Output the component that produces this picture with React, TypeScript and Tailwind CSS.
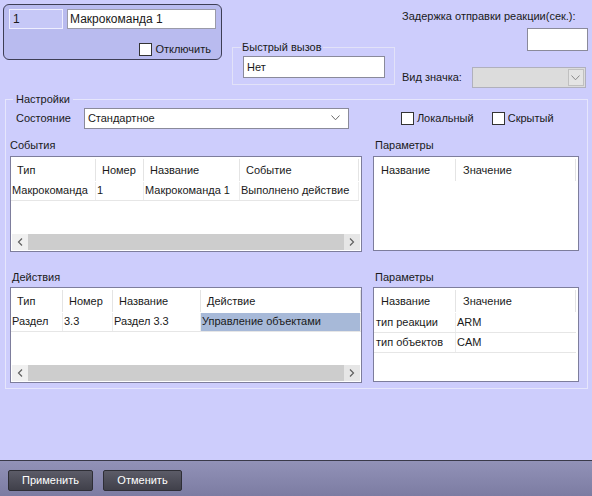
import React from 'react';

const Chevron = ({ color = '#6b6b6b' }: { color?: string }) => (
  <svg width="9" height="6" viewBox="0 0 9 6" fill="none">
    <path d="M0.5 0.5 L4.5 4.8 L8.5 0.5" stroke={color} strokeWidth="1" />
  </svg>
);

const Check = ({ label }: { label: string }) => (
  <label className="flex items-center gap-[3px]">
    <span className="w-[13px] h-[13px] bg-white border border-[#333]" />
    <span>{label}</span>
  </label>
);

const ScrollBar = () => (
  <div className="mt-auto flex h-[16px] mx-[1px] mb-[1px]">
    <div className="w-[16px] flex items-center justify-center bg-[#f0f0f0]">
      <svg width="6" height="8" viewBox="0 0 6 8" fill="none"><path d="M5 0.5 L1.5 4 L5 7.5" stroke="#606060" strokeWidth="1.2" /></svg>
    </div>
    <div className="flex-1 bg-[#cdcdcd]" />
    <div className="w-[16px] flex items-center justify-center bg-[#e6e6e6]">
      <svg width="6" height="8" viewBox="0 0 6 8" fill="none"><path d="M1 0.5 L4.5 4 L1 7.5" stroke="#606060" strokeWidth="1.2" /></svg>
    </div>
  </div>
);

type Col = { title: string; w: number };

function Table({ cols, rows, selected }: { cols: Col[]; rows: string[][]; selected?: [number, number] }) {
  return (
    <div className="w-[352px] h-[96px] bg-white border border-[#7d7d9c] flex flex-col">
      <div className="flex h-[25px] items-center pt-[2px]">
        {cols.map((c, i) => (
          <div key={i} className="h-[22px] flex items-center pl-[6px] border-r border-[#e4e4e4]" style={{ width: c.w }}>
            {c.title}
          </div>
        ))}
      </div>
      {rows.map((r, ri) => (
        <div key={ri} className="flex h-[19px] items-center border-b border-[#e6e6e6]" style={{ width: cols.reduce((a, c) => a + c.w, 0) }}>
          {r.map((cell, ci) => (
            <div
              key={ci}
              className={`h-full flex items-center pl-[1px] border-r border-[#ececec] whitespace-nowrap ${selected && selected[0] === ri && selected[1] === ci ? 'bg-[#a7b9d8]' : ''}`}
              style={{ width: cols[ci].w }}
            >
              {cell}
            </div>
          ))}
        </div>
      ))}
      <ScrollBar />
    </div>
  );
}

function Params({ rows }: { rows: string[][] }) {
  return (
    <div className="w-[206px] h-[95px] bg-white border border-[#7d7d9c]">
      <div className="flex h-[25px] items-center pt-[2px]">
        <div className="w-[82px] h-[22px] flex items-center pl-[7px] border-r border-[#e4e4e4]">Название</div>
        <div className="w-[120px] h-[22px] flex items-center pl-[7px] border-r border-[#e4e4e4]">Значение</div>
      </div>
      {rows.map((r, i) => (
        <div key={i} className="flex h-[20px] w-[202px] border-b border-[#e6e6e6]">
          <div className="w-[82px] flex items-center pl-[2px] border-r border-[#ececec]">{r[0]}</div>
          <div className="flex-1 flex items-center pl-[1px]">{r[1]}</div>
        </div>
      ))}
    </div>
  );
}

export default function App() {
  return (
    <div className="w-[592px] h-[496px] bg-[#cdcdfc] text-[11px] text-[#1a1a1a] font-['Liberation_Sans',Arial,sans-serif] flex flex-col">
      <div className="flex-1">
        {/* верх */}
        <div className="flex h-[91px]">
          <div className="ml-[3px] mt-[4px] w-[219px] h-[56px] rounded-[6px] border border-[#3e3e55] bg-[#b9bbef] px-[5px] pt-[4px]">
            <div className="flex gap-[4px]">
              <div className="w-[54px] h-[20px] border border-[#eef] bg-[#c6c8f7] pl-[3px] leading-[18px] text-[12px]">1</div>
              <div className="w-[149px] h-[20px] border border-[#9a9aa8] bg-white pl-[2px] leading-[18px] text-[12px]">Макрокоманда 1</div>
            </div>
            <div className="flex justify-end mt-[12px] pr-[5px]">
              <Check label="Отключить" />
            </div>
          </div>
          <fieldset className="ml-[10px] mt-[39px] w-[163px] h-[46px] border border-[#e2e2f8] pl-[10px]">
            <legend className="px-[1px] -ml-[2px]">Быстрый вызов</legend>
            <div className="w-[142px] h-[22px] border border-[#8a8a9a] bg-white pl-[3px] leading-[20px]">Нет</div>
          </fieldset>
          <div className="ml-[7px] w-[186px] flex flex-col">
            <div className="mt-[9px] leading-[14px] whitespace-nowrap">Задержка отправки реакции(сек.):</div>
            <div className="self-end mt-[5px] w-[61px] h-[23px] bg-white border border-[#8a8a9a]" />
            <div className="flex items-center mt-[16px]">
              <span className="whitespace-nowrap">Вид значка:</span>
              <div className="ml-[10px] w-[114px] h-[21px] bg-[#dcdcdc] border border-[#b0b0bc] flex justify-end">
                <div className="w-[16px] h-[17px] m-[1px] border border-[#c0c0c0] bg-[#e4e4e4] flex items-center justify-center">
                  <Chevron color="#8a8a8a" />
                </div>
              </div>
            </div>
          </div>
        </div>

        {/* Настройки */}
        <fieldset className="mx-[5px] w-[583px] h-[298px] border border-[#e6e6fc] px-[4px]">
          <legend className="ml-[3px] px-[3px]">Настройки</legend>
          <div className="flex items-center h-[21px]">
            <span className="ml-[6px]">Состояние</span>
            <div className="ml-[13px] w-[265px] h-[21px] bg-white border border-[#8a8a9a] flex items-center justify-between pl-[3px] pr-[8px]">
              <span>Стандартное</span>
              <Chevron />
            </div>
            <div className="ml-[52px] flex gap-[18px]">
              <Check label="Локальный" />
              <Check label="Скрытый" />
            </div>
          </div>

          <div className="flex gap-[11px] mt-[9px]">
            <div>
              <div className="h-[18px] leading-[15px]">События</div>
              <Table
                cols={[
                  { title: 'Тип', w: 85 },
                  { title: 'Номер', w: 48 },
                  { title: 'Название', w: 96 },
                  { title: 'Событие', w: 119 },
                ]}
                rows={[['Макрокоманда', '1', 'Макрокоманда 1', 'Выполнено действие']]}
              />
            </div>
            <div>
              <div className="h-[18px] leading-[15px] pl-[2px]">Параметры</div>
              <Params rows={[]} />
            </div>
          </div>

          <div className="flex gap-[11px] mt-[18px]">
            <div>
              <div className="h-[17px] leading-[15px] pl-[2px]">Действия</div>
              <Table
                cols={[
                  { title: 'Тип', w: 52 },
                  { title: 'Номер', w: 50 },
                  { title: 'Название', w: 88 },
                  { title: 'Действие', w: 160 },
                ]}
                rows={[['Раздел', '3.3', 'Раздел 3.3', 'Управление объектами']]}
                selected={[0, 3]}
              />
            </div>
            <div>
              <div className="h-[17px] leading-[15px] pl-[2px]">Параметры</div>
              <Params rows={[['тип реакции', 'ARM'], ['тип объектов', 'CAM']]} />
            </div>
          </div>
        </fieldset>
      </div>

      {/* нижняя панель */}
      <div className="h-[36px] border-t border-[#3a3a4a] bg-gradient-to-b from-[#9292b8] to-[#7c7ca2] flex items-center gap-[10px] pl-[8px] pt-[3px]">
        <button className="w-[85px] h-[21px] rounded-[2px] border border-[#2e2e36] bg-gradient-to-b from-[#5c5c68] to-[#40404a] text-white">Применить</button>
        <button className="w-[79px] h-[21px] rounded-[2px] border border-[#2e2e36] bg-gradient-to-b from-[#5c5c68] to-[#40404a] text-white">Отменить</button>
      </div>
    </div>
  );
}
